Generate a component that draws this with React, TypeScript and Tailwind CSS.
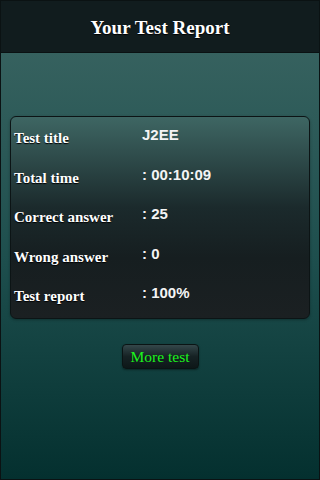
const rows = [
  { label: "Test title", value: "J2EE" },
  { label: "Total time", value: ": 00:10:09" },
  { label: "Correct answer", value: ": 25" },
  { label: "Wrong answer", value: ": 0" },
  { label: "Test report", value: ": 100%" },
];

export default function App() {
  return (
    <div className="w-[320px] h-[480px] flex flex-col border border-[#0b1213] bg-[linear-gradient(to_bottom,#3c6663_0%,#1d4e4d_55%,#04302f_100%)]">
      {/* Header */}
      <div className="h-[52px] shrink-0 flex items-center justify-center bg-[#111c1e] border-b border-[#0a1112]">
        <h1 className="text-[19px] font-bold text-white font-['Liberation_Serif',serif] [text-shadow:0_1px_1px_#000] pt-[4px]">
          Your Test Report
        </h1>
      </div>

      {/* Report card */}
      <div className="px-[9px] pt-[63px]">
        <div className="h-[203px] rounded-[6px] border border-[#0c1415] bg-[linear-gradient(to_bottom,#3e6663_0%,#1b2a2c_45%,#161e20_70%,#1b2022_100%)] pl-[3px] pt-[1px] shadow-[0_1px_3px_rgba(0,0,0,0.3)]">
          {rows.map((row) => (
            <div key={row.label} className="h-[39.6px] grid grid-cols-[128px_1fr] items-center">
              <span className="text-[15px] font-bold text-white font-['Liberation_Serif',serif] [text-shadow:0_1px_1px_#000] pt-[1px]">
                {row.label}
              </span>
              <span className="text-[15px] font-bold text-[#f4f4f4] font-['Liberation_Sans',sans-serif] mb-[5px]">
                {row.value}
              </span>
            </div>
          ))}
        </div>
      </div>

      {/* Action */}
      <div className="flex justify-center pt-[25px]">
        <button className="w-[77px] h-[25px] rounded-[4px] border border-[#0a1414] bg-[linear-gradient(to_bottom,#34474a_0%,#162224_50%,#0d1718_100%)] text-[15.5px] leading-none text-[#1cf51c] font-['Liberation_Serif',serif] shadow-[0_1px_2px_rgba(0,0,0,0.4)]">
          More test
        </button>
      </div>
    </div>
  );
}
